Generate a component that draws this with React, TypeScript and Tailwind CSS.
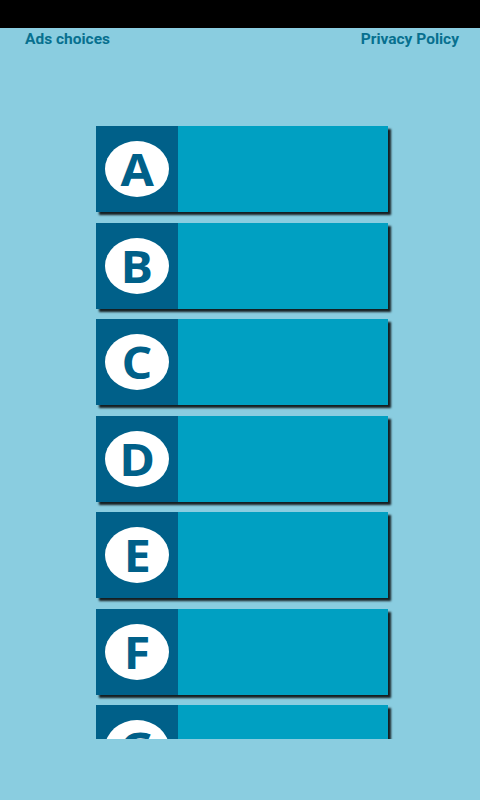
import React from "react";

const letters = ["A", "B", "C", "D", "E", "F", "G"];

export default function App() {
  return (
    <div className="w-[480px] h-[800px] bg-[#8acde0] flex flex-col overflow-hidden">
      <div className="h-[28px] bg-black shrink-0" />
      <div
        className="flex justify-between px-[21px] pt-[1px] h-[20px] text-[15.5px] font-bold text-[#07708f] leading-[20px]"
        style={{ fontFamily: "Roboto, 'Liberation Sans', sans-serif" }}
      >
        <span className="ml-[4px]">Ads choices</span>
        <span>Privacy Policy</span>
      </div>
      <div className="h-[691px] overflow-hidden shrink-0">
        <div className="flex flex-col items-start gap-[10.5px] pl-[96px] pt-[78px]">
          {letters.map((l) => (
            <div
              key={l}
              className="w-[292px] h-[86px] shrink-0 flex bg-[#00a0c2] shadow-[3px_3px_2px_rgba(0,0,0,0.85)]"
            >
              <div className="w-[82px] h-full bg-[#006089] flex items-center justify-center">
                <div className="w-[64px] h-[56px] rounded-[50%] bg-white flex items-center justify-center">
                  <span
                    className="text-[44px] font-bold text-[#006089] leading-none scale-x-110"
                    style={{ fontFamily: "'Open Sans', sans-serif" }}
                  >
                    {l}
                  </span>
                </div>
              </div>
            </div>
          ))}
        </div>
      </div>
    </div>
  );
}
